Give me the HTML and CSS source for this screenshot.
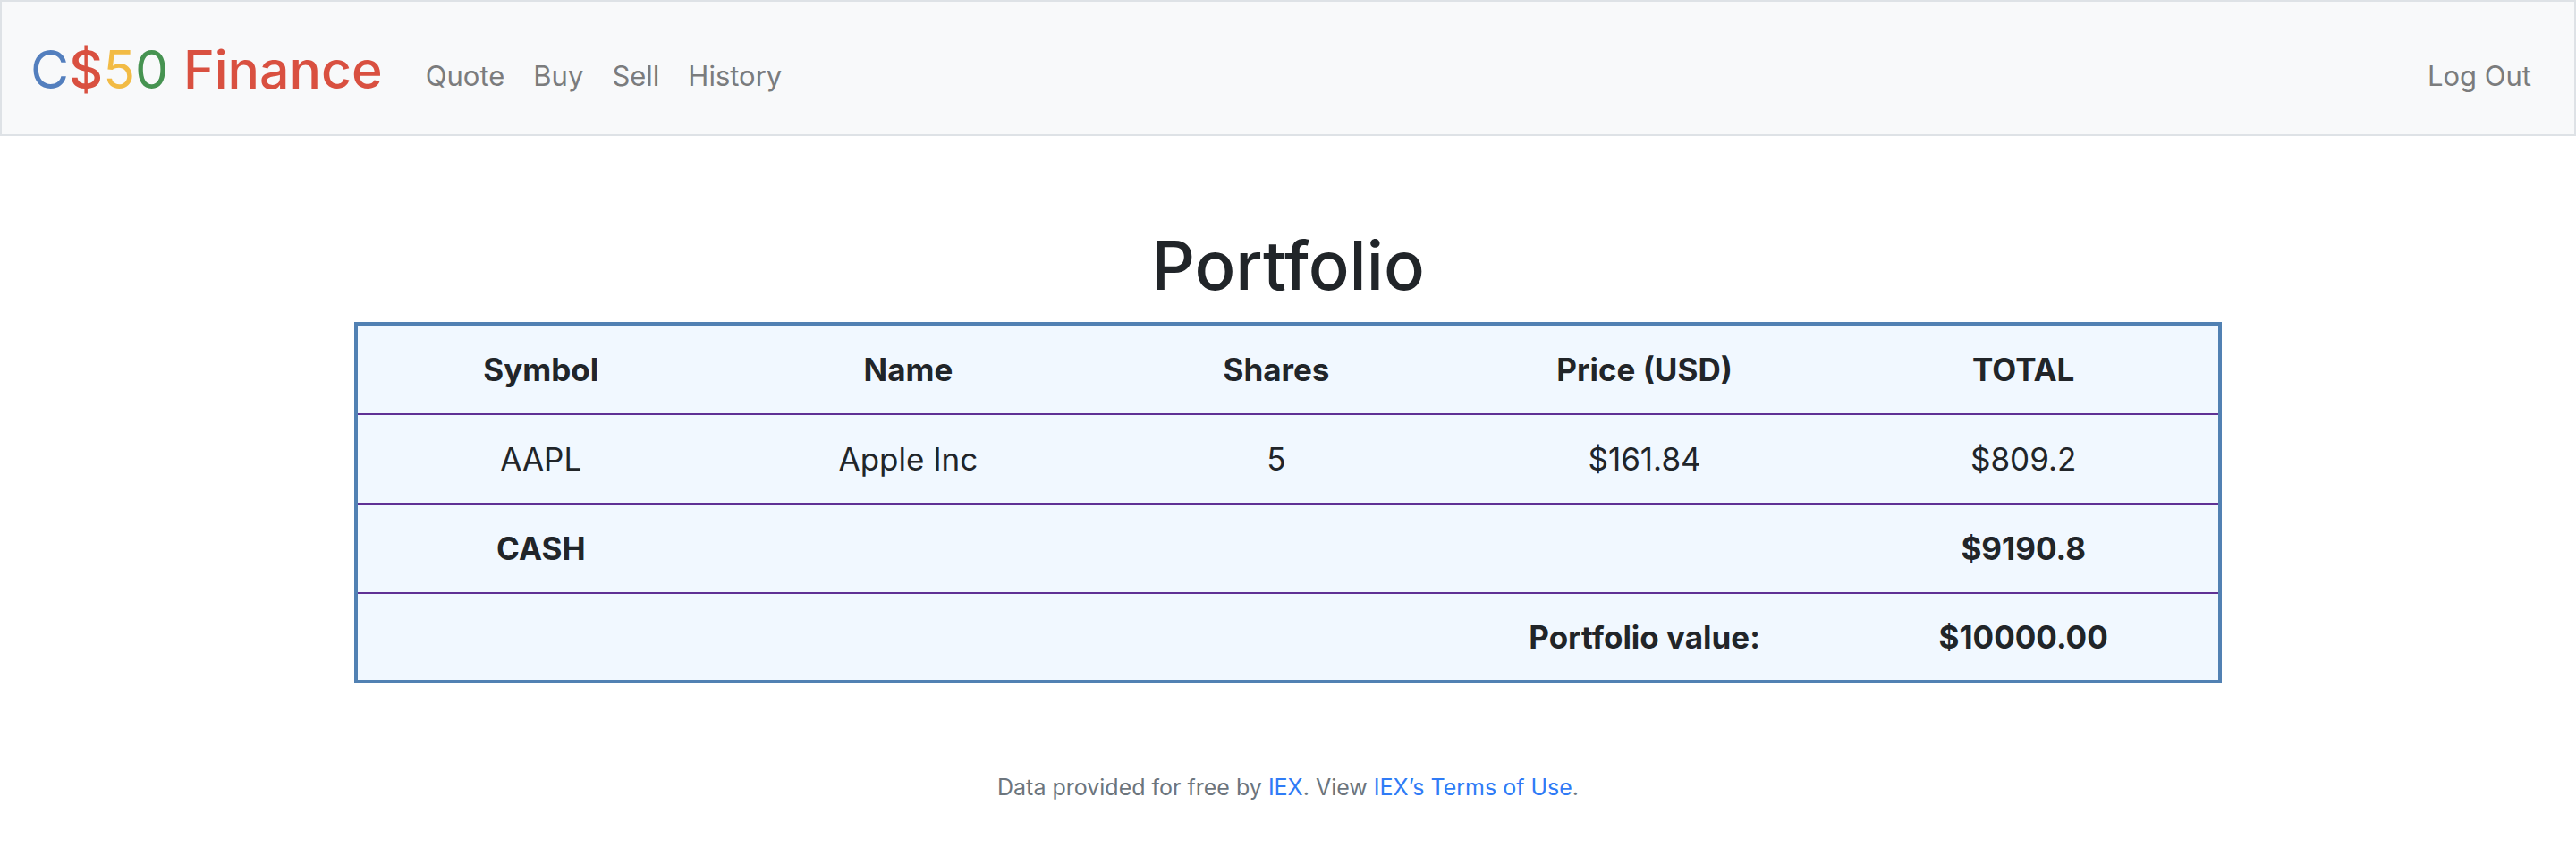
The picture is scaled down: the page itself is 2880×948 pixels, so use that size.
FILE: index.html
```html
<!DOCTYPE html>
<html lang="en">
<head>
<meta charset="utf-8">
<meta name="viewport" content="width=device-width, initial-scale=1">
<title>C$50 Finance: Portfolio</title>
<link rel="stylesheet" href="styles.css">
</head>
<body>
<nav class="navbar">
  <a class="brand" href="#"><span class="blue">C</span><span class="red">$</span><span class="yellow">5</span><span class="green">0</span> <span class="red">Finance</span></a>
  <ul class="nav-list">
    <li><a class="nav-link" href="#">Quote</a></li>
    <li><a class="nav-link" href="#">Buy</a></li>
    <li><a class="nav-link" href="#">Sell</a></li>
    <li><a class="nav-link" href="#">History</a></li>
  </ul>
  <ul class="nav-list nav-end">
    <li><a class="nav-link" href="#">Log Out</a></li>
  </ul>
</nav>
<main class="main">
  <h1 class="title">Portfolio</h1>
  <table class="portfolio">
    <colgroup>
      <col><col><col><col><col class="col-total">
    </colgroup>
    <thead>
      <tr><th>Symbol</th><th>Name</th><th>Shares</th><th>Price (USD)</th><th>TOTAL</th></tr>
    </thead>
    <tbody>
      <tr><td>AAPL</td><td>Apple Inc</td><td>5</td><td>$161.84</td><td>$809.2</td></tr>
      <tr><th>CASH</th><td></td><td></td><td></td><th>$9190.8</th></tr>
    </tbody>
    <tfoot>
      <tr><td></td><td></td><td></td><th>Portfolio value:</th><th>$10000.00</th></tr>
    </tfoot>
  </table>
</main>
<footer class="footer">
  Data provided for free by <a href="#">IEX</a>. View <a href="#">IEX’s Terms of Use</a>.
</footer>
</body>
</html>
```
FILE: styles.css
```css
* {
  box-sizing: border-box;
}

body {
  margin: 0;
  background: #fff;
  color: #212529;
  font-family: Inter, "Liberation Sans", sans-serif;
  font-size: 31px;
  line-height: 48px;
}

a {
  color: #2f7bf6;
  text-decoration: none;
}

.navbar {
  display: flex;
  align-items: center;
  padding: 24px 48px 24px 32px;
  border: 2px solid #dee2e6;
  background: #f8f9fa;
}

.brand {
  margin-right: 48px;
  padding-top: 4px;
  font-size: 59px;
  line-height: 96px;
}

.blue { color: #537fbe; }
.red { color: #d95040; font-weight: 500; }
.yellow { color: #f2bb45; }
.green { color: #469351; }

.nav-list {
  display: flex;
  gap: 32px;
  margin: 0;
  padding: 18px 0 0;
  list-style: none;
}

.nav-end {
  margin-left: auto;
}

.nav-link {
  color: #7b7c7d;
}

.main {
  padding: 96px 0;
}

.title {
  margin: 0 0 16px;
  font-size: 76px;
  font-weight: 500;
  line-height: 96px;
  text-align: center;
}

.portfolio {
  width: 72.5%;
  margin: 0 auto;
  table-layout: fixed;
  border-collapse: collapse;
  border: 4px solid #5181b3;
  background: #f1f8ff;
  font-size: 35px;
  line-height: 54px;
  text-align: center;
}

.col-total {
  width: 21%;
}

.portfolio th,
.portfolio td {
  height: 100px;
  padding: 0;
}

.portfolio thead th {
  height: 101px;
}

.portfolio tfoot th,
.portfolio tfoot td {
  height: 99px;
}

.portfolio th {
  font-weight: 700;
}

.portfolio tbody tr,
.portfolio tfoot tr {
  border-top: 2px solid #5f3195;
}

.footer {
  color: #6c757d;
  font-size: 25px;
  line-height: 40px;
  text-align: center;
}
```
